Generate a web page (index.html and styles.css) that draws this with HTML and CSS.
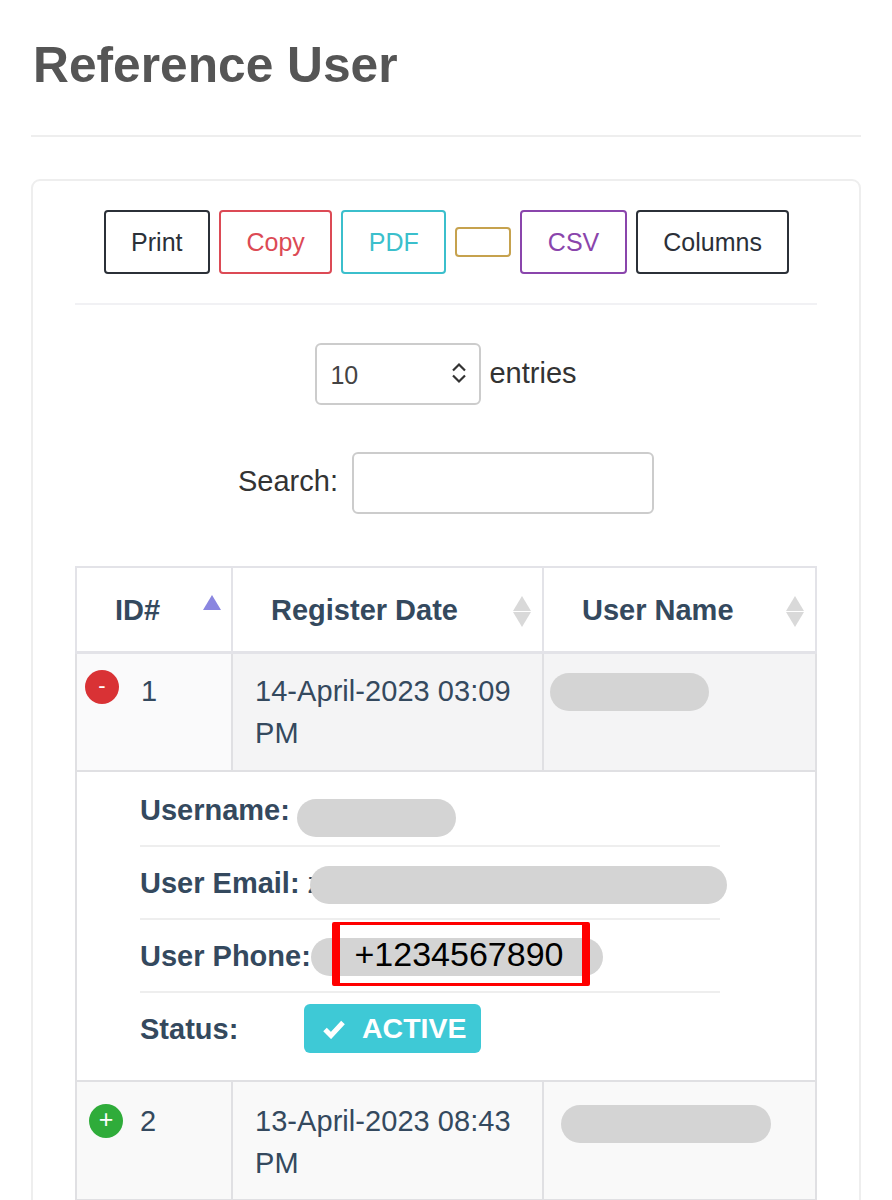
FILE: index.html
```html
<!DOCTYPE html>
<html lang="en">
<head>
<meta charset="utf-8">
<title>Reference User</title>
<link rel="stylesheet" href="styles.css">
</head>
<body>
<main class="page">
  <h1 class="title">Reference User</h1>
  <hr class="rule">
  <section class="card">
    <div class="buttons">
      <button class="btn btn-dark">Print</button>
      <button class="btn btn-red">Copy</button>
      <button class="btn btn-cyan">PDF</button>
      <button class="btn btn-gold" aria-label="Excel"></button>
      <button class="btn btn-purple">CSV</button>
      <button class="btn btn-dark">Columns</button>
    </div>
    <hr class="rule-inner">
    <div class="length">
      <div class="select">
        <span>10</span>
        <svg class="chevrons" viewBox="0 0 18 24" width="18" height="24" aria-hidden="true"><path d="M3 9.5 9 3.5l6 6M3 14.500 9 20.500l6-6" fill="none" stroke="#333" stroke-width="2.200"/></svg>
      </div>
      <span class="length-label">entries</span>
    </div>
    <div class="search">
      <label class="search-label" for="q">Search:</label>
      <input class="search-input" id="q" type="text">
    </div>
    <table class="table">
      <colgroup><col class="col-id"><col class="col-date"><col class="col-name"></colgroup>
      <thead>
        <tr>
          <th class="th-id">ID#<span class="sort"><i class="up up-active"></i></span></th>
          <th class="th-date">Register Date<span class="sort"><i class="up"></i><i class="down"></i></span></th>
          <th class="th-name">User Name<span class="sort"><i class="up"></i><i class="down"></i></span></th>
        </tr>
      </thead>
      <tbody>
        <tr class="row row-one">
          <td class="cell-id cell-id-one"><span class="ctrl ctrl-minus">-</span>1</td>
          <td class="cell-date">14-April-2023 03:09 PM</td>
          <td class="cell-name"><span class="redact redact-n1"></span></td>
        </tr>
        <tr class="child">
          <td colspan="3">
            <ul class="details">
              <li class="detail"><b class="key">Username:</b><span class="redact redact-user"></span></li>
              <li class="detail"><b class="key">User Email:</b><span class="peek">z</span><span class="redact redact-mail"></span></li>
              <li class="detail"><b class="key">User Phone:</b><span class="redact redact-phone"></span><span class="phone-mark">+1234567890</span></li>
              <li class="detail detail-last"><b class="key key-status">Status:</b><span class="badge"><svg class="check" viewBox="0 0 24 20" width="24" height="20" aria-hidden="true"><path d="M3 10.500 9 16.500 21 3.500" fill="none" stroke="#fff" stroke-width="5"/></svg>ACTIVE</span></li>
            </ul>
          </td>
        </tr>
        <tr class="row row-two">
          <td class="cell-id cell-id-two"><span class="ctrl ctrl-plus">+</span>2</td>
          <td class="cell-date">13-April-2023 08:43 PM</td>
          <td class="cell-name"><span class="redact redact-n2"></span></td>
        </tr>
      </tbody>
    </table>
  </section>
</main>
</body>
</html>
```
FILE: styles.css
```css
* { box-sizing: border-box; }
html, body { margin: 0; padding: 0; background: #fff; }
body { height: 1200px; overflow: hidden; font-family: "Liberation Sans", Arial, sans-serif; color: #333; }
.page { padding: 0 31px; }
.title { margin: 0; padding-top: 36px; height: 135px; font-size: 49.7px; line-height: 58px; font-weight: 700; color: #555; padding-left: 2px; }
.rule { margin: 0; border: 0; border-top: 2px solid #eee; }
.card { margin-top: 42px; border: 2px solid #eee; border-radius: 9px; padding: 29px 42px 0; height: 1100px; }
.buttons { display: flex; justify-content: center; align-items: center; gap: 9px; height: 64px; padding-left: 1px; }
.btn { height: 64px; padding: 0 25.5px; background: #fff; border: 2px solid; border-radius: 4px; font: 25px/1 "Liberation Sans", Arial, sans-serif; }
.btn-dark { color: #2b3038; border-color: #2b3038; }
.btn-red { color: #dc4a55; border-color: #dc4a55; }
.btn-cyan { color: #3bbfcc; border-color: #3bbfcc; }
.btn-gold { height: 30px; width: 56px; padding: 0; border-color: #c6a24e; }
.btn-purple { color: #8a45ac; border-color: #8a45ac; }
.rule-inner { margin: 29px 0 0; border: 0; border-top: 2px solid #f1f1f4; }
.length { display: flex; justify-content: center; align-items: center; gap: 8px; margin-top: 38px; }
.select { display: flex; justify-content: space-between; align-items: center; width: 166px; height: 62px; padding: 2px 11px 0 13px; border: 2px solid #ccc; border-radius: 6px; font-size: 25px; color: #444; }
.chevrons { display: block; margin-top: -4px; }
.length-label { font-size: 29px; color: #333; margin-top: -2px; }
.search { display: flex; justify-content: center; align-items: center; gap: 14px; margin-top: 47px; }
.search-label { font-size: 29px; color: #333; margin-top: -4px; }
.search-input { width: 302px; height: 62px; border: 2px solid #ccc; border-radius: 6px; background: #fff; }
.table { width: 740px; margin: 52px 0 0; table-layout: fixed; border-collapse: collapse; font-size: 29px; color: #34495e; border: 2px solid #e3e3e8; }
.col-id { width: 156px; }
.col-date { width: 311px; }
.col-name { width: 273px; }
.table th { position: relative; height: 85px; padding: 3px 0 0 38px; text-align: left; font-weight: 700; color: #34495e; border: 2px solid #e3e3e8; border-bottom-width: 3px; }
.sort { position: absolute; top: 28px; right: 11px; display: flex; flex-direction: column; gap: 1px; }
.th-id .sort { top: 27px; right: 10px; }
.up, .down { display: block; width: 0; height: 0; border-left: 9px solid transparent; border-right: 9px solid transparent; }
.up { border-bottom: 15px solid #d9d9d9; }
.down { border-top: 15px solid #d9d9d9; }
.up-active { border-bottom-color: #8a86e0; }
.table td { border: 2px solid #e0e0e3; vertical-align: top; }
.row-one td { background: #f4f4f5; height: 119px; }
.row-two td { background: #f9f9f9; height: 119px; }
.table .cell-id-one { background: #fafafb; }
.cell-id { position: relative; padding: 18px 0 0 64px; line-height: 42px; }
.row-one .cell-id { padding-top: 16px; }
.cell-id-two { padding-left: 63px; }
.cell-date { padding: 18px 20px 0 22px; line-height: 42px; letter-spacing: .05px; }
.row-one .cell-date { padding-top: 16px; }
.cell-name { padding: 19px 0 0 6px; }
.row-two .cell-name { padding: 23px 0 0 17px; }
.ctrl { position: absolute; top: 16px; left: 8px; width: 34px; height: 34px; border-radius: 50%; color: #fff; font-size: 22px; line-height: 31px; text-align: center; }
.ctrl-minus { background: #d93235; }
.ctrl-plus { left: 12px; top: 22px; background: #2fac3a; font-size: 25px; }
.redact { display: inline-block; flex: none; height: 38px; border-radius: 19px; background: #d4d4d4; vertical-align: top; }
.redact-n1 { width: 159px; }
.redact-n2 { width: 210px; }
.redact-user { width: 159px; margin: 25px 0 0 7px; }
.redact-mail { width: 417px; margin: 19px 0 0 -12px; }
.peek { margin-left: 8px; line-height: 73px; color: #34495e; }
.redact-phone { width: 292px; margin: 18px 0 0 0; }
.details { list-style: none; margin: 0; padding: 1px 0 24px 62px; width: 642px; }
.detail { position: relative; display: flex; height: 73px; border-bottom: 2px solid #eee; align-items: flex-start; white-space: nowrap; }
.detail-last { border-bottom: 0; height: 62px; }
.key { line-height: 73px; color: #34495e; }
.key-status { width: 164px; line-height: 73px; }
.badge { display: inline-flex; align-items: center; gap: 16px; height: 49px; margin-top: 11px; padding: 0 10px 0 18px; width: 177px; background: #3ec9d6; border-radius: 6px; color: #fff; font-size: 28.5px; font-weight: 700; }
.check { flex: none; }
.phone-mark { position: absolute; left: 192px; top: 2px; width: 258px; height: 64px; border: solid #f00; border-width: 3px 8px; border-radius: 2px; font-size: 34px; line-height: 58px; text-align: center; text-indent: -4px; color: #000; }
```
